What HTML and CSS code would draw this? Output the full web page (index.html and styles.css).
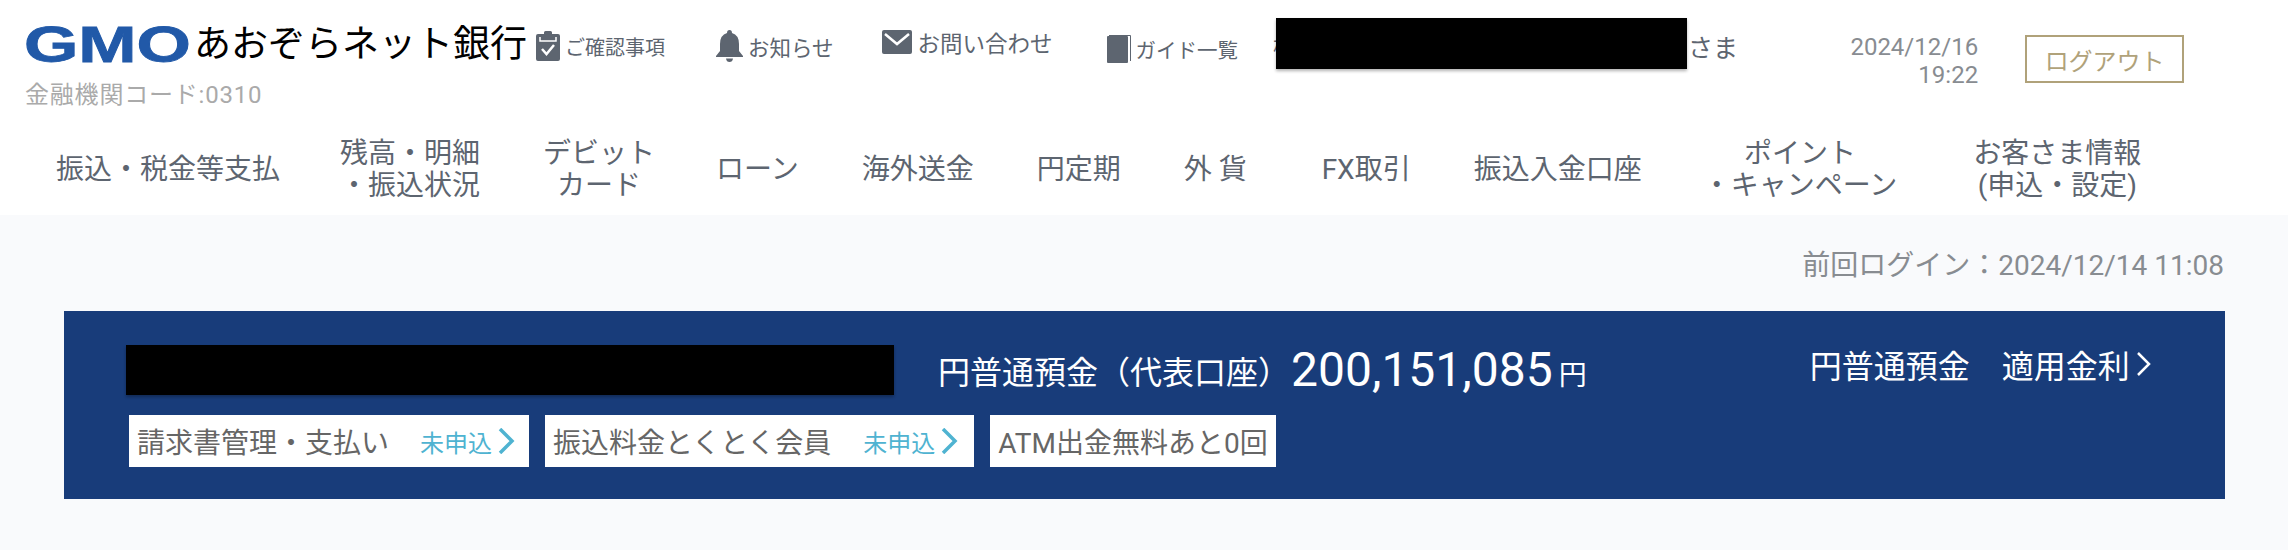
FILE: index.html
```html
<!DOCTYPE html>
<html lang="ja">
<head>
  <meta charset="UTF-8" />
  <meta name="viewport" content="width=device-width, initial-scale=1.0">
  <title>GMOあおぞらネット銀行</title>
  <link rel="stylesheet" href="styles.css">
</head>
<body>
  <header class="site-head">
    <div class="top-row">
      <div class="brand">
        <div class="logo">
          <div class="gmo"><span>GMO</span></div>
          <span class="bank-name">あおぞらネット銀行</span>
        </div>
        <div class="bank-code">金融機関コード:0310</div>
      </div>

      <div class="util-links">
        <a class="util check-link">
          <svg width="24" height="30" viewBox="0 0 24 30">
            <path fill="#5d6570" d="M2 3h6V1.500Q8 0 9.500 0h5Q16 0 16 1.500V3h6q2 0 2 2v23q0 2-2 2H2q-2 0-2-2V5q0-2 2-2z"/>
            <path fill="none" stroke="#fff" stroke-width="1.500" d="M4 6v4h16V6"/>
            <path fill="none" stroke="#fff" stroke-width="2.500" d="M6 18l4.500 5L18 14"/>
          </svg>
          ご確認事項
        </a>
        <a class="util bell-link">
          <svg width="27" height="32" viewBox="0 0 27 32">
            <path fill="#5d6570" d="M13.500 0q2.500 0 2.500 3 7 2 7 11v7l4 5v1H0v-1l4-5v-7Q4 5 11 3q0-3 2.500-3zM10 28.500h7q-.5 3.500-3.500 3.500T10 28.500z"/>
          </svg>
          お知らせ
        </a>
        <a class="util mail-link">
          <svg width="30" height="24" viewBox="0 0 30 24">
            <rect width="30" height="24" rx="2" fill="#5d6570"/>
            <path fill="none" stroke="#fff" stroke-width="2.500" d="M3 4l12 10L27 4"/>
          </svg>
          お問い合わせ
        </a>
        <a class="util book-link">
          <svg width="25" height="28" viewBox="0 0 25 28">
            <rect y="1" width="21" height="27" rx="1" fill="#5d6570"/>
            <path fill="none" stroke="#5d6570" d="M2 .5h21.500V26"/>
          </svg>
          ガイド一覧
        </a>
      </div>

      <div class="user-name">
        <span class="name-head">様</span>
        <div class="redact name-redact"></div>
        <span class="name-sama">さま</span>
      </div>

      <div class="clock">2024/12/16<br>19:22</div>
      <a class="logout">ログアウト</a>
    </div>

    <nav class="main-nav">
      <a class="nav-first">振込・税金等支払</a>
      <a>残高・明細<br>・振込状況</a>
      <a class="nav-debit">デビット<br>カード</a>
      <a>ローン</a>
      <a>海外送金</a>
      <a>円定期</a>
      <a class="nav-fx-before">外 貨</a>
      <a>FX取引</a>
      <a class="nav-deposit">振込入金口座</a>
      <a class="nav-point">ポイント<br>・キャンペーン</a>
      <a>お客さま情報<br>(申込・設定)</a>
    </nav>
  </header>

  <main>
    <p class="last-login">前回ログイン：2024/12/14 11:08</p>

    <section class="account-panel">
      <div class="balance-row">
        <div class="redact account-redact"></div>
        <span class="account-type">円普通預金（代表口座）</span>
        <span class="amount">200,151,085</span>
        <span class="yen">円</span>
        <a class="rate-link">
          円普通預金　適用金利
          <svg width="20" height="26" viewBox="0 0 20 26"><path fill="none" stroke="#fff" stroke-width="2.500" d="M4 2l11 11L4 24"/></svg>
        </a>
      </div>
      <div class="badges">
        <a class="badge">請求書管理・支払い
          <span class="status">未申込</span>
          <svg width="17" height="26" viewBox="0 0 17 26"><path fill="none" stroke="#4fb3d1" stroke-width="3.500" d="M2 1l12 12L2 25"/></svg>
        </a>
        <a class="badge badge-fee">振込料金とくとく会員
          <span class="status">未申込</span>
          <svg width="17" height="26" viewBox="0 0 17 26"><path fill="none" stroke="#4fb3d1" stroke-width="3.500" d="M2 1l12 12L2 25"/></svg>
        </a>
        <span class="badge">ATM出金無料あと0回</span>
      </div>
    </section>
  </main>
</body>
</html>
```
FILE: styles.css
```css
:root {
  --bg-color: #f9fafc;
  --navy: #183c7a;
  --text-nav: #5d6570;
  --text-soft: #888c91;
  --gold: #b0a27a;
  --aqua: #4fb3d1;
}
* { box-sizing: border-box; }
body {
  margin: 0;
  background: var(--bg-color);
  font-family: Roboto, "Noto Sans CJK JP", sans-serif;
  overflow: hidden;
}
a { color: inherit; text-decoration: none; }

.site-head {
  background: #fff;
  height: 215px;
}
.top-row {
  display: flex;
  align-items: flex-start;
  height: 119px;
  padding: 27px 0 0 25px;
}

/* logo block */
.logo {
  display: flex;
  align-items: center;
  height: 36px;
}
.gmo {
  flex-shrink: 0;
  width: 170px;
  margin-left: -1px;
  font-family: "Liberation Sans", sans-serif;
  font-weight: 700;
  font-size: 50px;
  line-height: 36px;
  color: #2159a8;
  -webkit-text-stroke: 0.8px #2159a8;
}
.gmo span {
  display: inline-block;
  transform: scaleX(1.398);
  transform-origin: left center;
}
.bank-name {
  font-size: 37px;
  line-height: 36px;
  color: #000;
  white-space: nowrap;
}
.bank-code {
  margin-top: 18px;
  font-size: 24px;
  line-height: 28px;
  letter-spacing: 0.8px;
  color: #aaa;
}

/* small links */
.util-links {
  display: flex;
  gap: 51px;
  margin: 3px 0 0 9px;
}
.util {
  display: flex;
  align-items: center;
  gap: 5px;
  height: 32px;
  font-size: 20px;
  color: var(--text-nav);
  white-space: nowrap;
}
.bell-link { font-size: 21.5px; }
.mail-link {
  font-size: 22.5px;
  gap: 6px;
  height: 24px;
  margin-left: -3px;
}
.book-link { margin: 3px 0 0 3px; gap: 4px; font-size: 20.5px; }

.user-name {
  display: flex;
  align-items: center;
  margin: -9px 0 0 35px;
  height: 51px;
  font-size: 25px;
  color: var(--text-nav);
}
.name-head { margin-right: -19px; font-size: 22px; }
.name-redact { width: 411px; height: 51px; }
.name-sama { margin: 4px 0 0 1px; white-space: nowrap; }
.redact {
  background: #000;
  box-shadow: 0 2px 3px rgba(0, 0, 0, 0.3);
}

.clock {
  margin: 6px 0 0 112px;
  width: 128px;
  flex-shrink: 0;
  font-size: 24px;
  line-height: 28px;
  text-align: right;
  color: var(--text-soft);
}
.logout {
  display: flex;
  align-items: center;
  justify-content: center;
  width: 159px;
  height: 48px;
  margin: 8px 0 0 47px;
  border: 2px solid var(--gold);
  font-size: 24px;
  color: var(--gold);
}

/* main nav */
.main-nav {
  display: flex;
  align-items: center;
  gap: 63px;
  height: 96px;
  padding: 6px 0 0 56px;
  font-size: 28px;
  line-height: 32px;
  text-align: center;
  color: var(--text-nav);
}
.main-nav a { white-space: nowrap; }
.nav-first { margin-right: -3px; }
.nav-debit { margin-right: -2px; }
.nav-fx-before { margin-right: 12px; }
.nav-deposit { margin-right: -2px; }
.nav-point { margin-right: 13px; }

/* content */
.last-login {
  margin: 0;
  padding: 33px 64px 0 0;
  height: 96px;
  font-size: 28px;
  line-height: 36px;
  text-align: right;
  color: var(--text-soft);
}
.account-panel {
  margin: 0 63px 0 64px;
  height: 188px;
  padding: 34px 0 0 62px;
  background: var(--navy);
}
.balance-row {
  display: flex;
  align-items: center;
  height: 50px;
  color: #fff;
}
.account-redact { width: 768px; height: 50px; flex-shrink: 0; }
.account-type {
  margin-left: 44px;
  font-size: 32px;
  white-space: nowrap;
}
.amount {
  margin-left: 1px;
  font-size: 48px;
  line-height: 50px;
}
.yen {
  margin: 6px 0 0 6px;
  font-size: 28px;
}
.rate-link {
  display: flex;
  align-items: center;
  margin: -12px 0 0 223px;
  font-size: 32px;
  white-space: nowrap;
}
.rate-link svg { margin-left: 4px; }

.badges {
  display: flex;
  gap: 16px;
  margin: 20px 0 0 3px;
}
.badge {
  display: flex;
  align-items: center;
  height: 52px;
  padding: 0 8px;
  background: #fff;
  font-size: 28px;
  color: #666;
  white-space: nowrap;
}
.status {
  margin-left: 31px;
  font-size: 24px;
  color: var(--aqua);
}
.badge svg { margin: 0 6px 0 6px; }
.badge-fee .status { margin-left: 32px; }
.badge-fee svg { margin-right: 8px; }
```
